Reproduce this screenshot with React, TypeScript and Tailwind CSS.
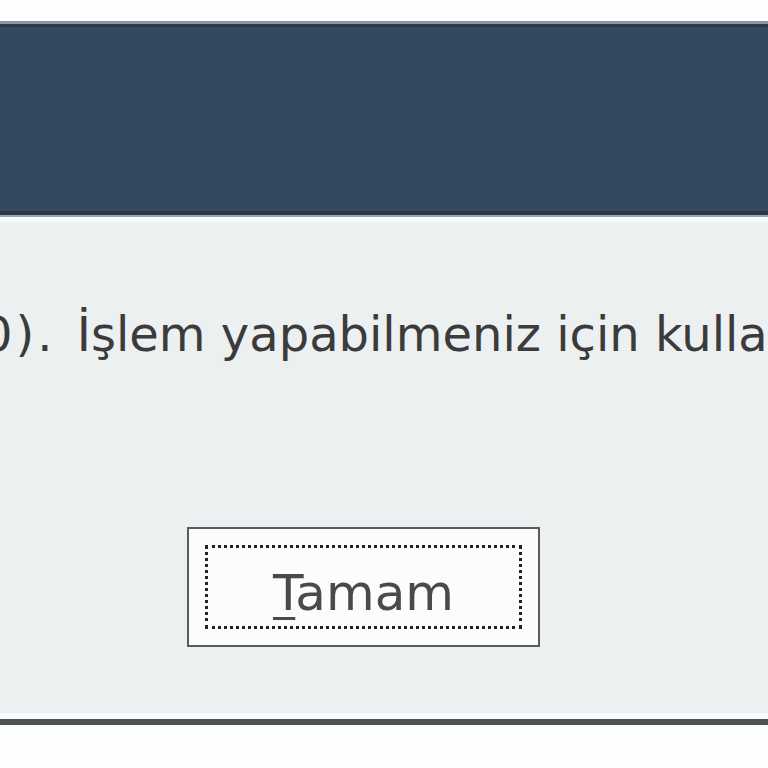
import React from "react";

export default function App() {
    return (
        <div className="h-screen w-full overflow-hidden bg-[#fdfefe] font-['DejaVu_Sans',sans-serif]">
            <div className="h-[21px] bg-[#fbfdff]"/>
            <div className="h-[3px] bg-[#8a96a0]"/>
            <div className="h-[191px] border-t-[3px] border-b-[4px] border-[#2b3846] bg-[#34495e]"/>
            <div className="h-[2px] bg-[#9aa5ad]"/>
            <div className="h-[5px] bg-[#f3faff]"/>
            <div className="h-[491px] bg-[#ecf0f1] flex flex-col pt-[88px]">
                <p className="ml-[-18px] whitespace-nowrap text-[48px] leading-[48px] text-[#3b3b3b]">
                    <span className="tracking-[3px]">0).</span>{" "}
                    <span className="ml-[6px]">İşlem yapabilmeniz için kullanıcı adınızı giriniz</span>
                </p>
                <div className="mt-[169px] ml-[187px]">
                    <button
                        className="w-[353px] h-[120px] border-2 border-[#585c5e] bg-[#fcfcfc] p-[16px] flex"
                    >
                        <span className="flex-1 flex items-center justify-center border-[3px] border-dotted border-[#222]">
                            <span className="mt-[12px] text-[50px] leading-[50px] text-[#4a4a4a]">
                                <span className="underline decoration-[3px] underline-offset-[7px]">T</span>amam
                            </span>
                        </span>
                    </button>
                </div>
            </div>
            <div className="h-[6px] bg-[#f5fcff]"/>
            <div className="h-[6px] bg-[#4c5354]"/>
        </div>
    );
}
